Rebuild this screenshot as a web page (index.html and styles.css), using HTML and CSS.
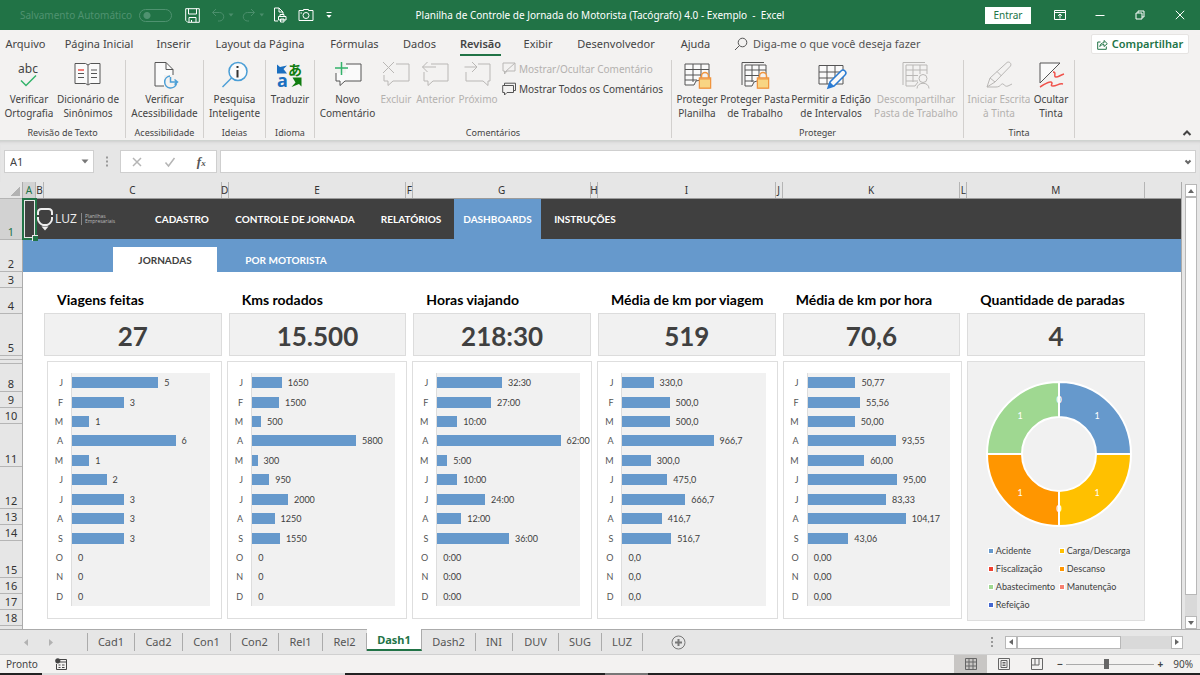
FILE: index.html
```html
<!DOCTYPE html>
<html lang="pt-BR">
<head>
<meta charset="utf-8">
<meta name="viewport" content="width=device-width, initial-scale=1">
<title>Planilha de Controle de Jornada do Motorista - Excel</title>
<link rel="stylesheet" href="styles.css">
</head>
<body>
<header class="titlebar">
  <div class="quick">
    <label class="autosave">Salvamento Automático<input type="checkbox" class="toggle" disabled></label>
    <button class="qbtn q-save" aria-label="Salvar"><svg width="15" height="15" viewBox="0 0 15 15"><path d="M.7.7h13.6v13.6H2.7L.7 12.300z M3.500 .7v5.300h8V.7 M4 14.300V9.500h7v4.800 M6.500 14v-2"/></svg></button>
    <button class="qbtn dim" aria-label="Desfazer"><svg width="20" height="14" viewBox="0 0 20 14"><path d="M5 1 1.500 4.500 5 8M1.500 4.500h7a4 4 0 0 1 0 8.500H7"/><path class="fill" d="M17.500 5.500h5l-2.500 3z"/></svg></button>
    <button class="qbtn dim" aria-label="Refazer"><svg width="22" height="14" viewBox="0 0 22 14"><path d="M9 1l3.500 3.500L9 8M12.500 4.500H5.500a4 4 0 0 0 0 8.500H7"/><path class="fill" d="M17.500 5.500h4.500l-2.200 3z"/></svg></button>
    <button class="qbtn q-print" aria-label="Visualizar impressão"><svg width="14" height="16" viewBox="0 0 14 16"><path d="M5 14H1.500V1H6l4 4v3M6 1v4h4M7 9.500V7.500h4v2M5.500 13V9.500h7.500V13zM7.500 12h3.500v3H7.500z"/></svg></button>
    <button class="qbtn" aria-label="Câmera"><svg width="16" height="14" viewBox="0 0 16 14"><path d="M1 2.500h4.500V1.500h5v1H15v10H1z"/><circle cx="8" cy="7.500" r="3"/><path d="M2.500 5h1.500"/></svg></button>
    <button class="qbtn" aria-label="Personalizar"><svg width="8" height="8" viewBox="0 0 8 8"><path d="M1.500 1.500h5"/><path class="fill" d="M1.500 4h5L4 7z"/></svg></button>
  </div>
  <h1 class="doc-title">Planilha de Controle de Jornada do Motorista (Tacógrafo) 4.0 - Exemplo&nbsp; -&nbsp; Excel</h1>
  <div class="window">
    <button class="signin">Entrar</button>
    <button class="wbtn" aria-label="Opções da faixa"><svg width="12" height="10" viewBox="0 0 12 10"><path d="M.5.5h11v9H.5zM.5 2.500h11M6 8.500V4M4 5.800 6 4l2 1.800"/></svg></button>
    <button class="wbtn" aria-label="Minimizar"><svg width="10" height="10" viewBox="0 0 10 10"><path d="M.5 5.500h9"/></svg></button>
    <button class="wbtn" aria-label="Restaurar"><svg width="10" height="10" viewBox="0 0 10 10"><path d="M1 3h6v6H1zM3 3V1h6v6H7"/></svg></button>
    <button class="wbtn" aria-label="Fechar"><svg width="10" height="10" viewBox="0 0 10 10"><path d="M.8.8l8.400 8.400M9.200.8.8 9.200"/></svg></button>
  </div>
</header>

<div class="menubar">
  <nav class="menu" aria-label="Guias">
    <button>Arquivo</button><button>Página Inicial</button><button>Inserir</button><button>Layout da Página</button><button>Fórmulas</button><button>Dados</button><button class="on"><span>Revisão</span></button><button>Exibir</button><button>Desenvolvedor</button><button>Ajuda</button>
  </nav>
  <label class="tellme"><svg width="14" height="14" viewBox="0 0 14 14"><circle cx="8.500" cy="5.500" r="4.300"/><path d="M5.500 8.500 1 13"/></svg><input type="text" placeholder="Diga-me o que você deseja fazer" aria-label="Diga-me"></label>
  <button class="share"><svg width="11" height="11" viewBox="0 0 11 11"><path d="M3.500 3H.7v7.300h8.600V7.500M2.800 7.500c.4-2.600 2-3.700 4.200-3.700V1.500l3.300 3.200L7 7.500V5.600c-2-.1-3.200.5-4.200 1.900z"/></svg>Compartilhar</button>
</div>

<section class="ribbon">
  <div class="group g-text">
    <div class="tools">
      <button><svg width="30" height="30" viewBox="0 0 30 30"><text x="14" y="13" class="abc">abc</text><path class="green" d="M7 20.500l5 5L22 15.500"/></svg>Verificar<br>Ortografia</button>
      <button><svg width="30" height="30" viewBox="0 0 30 30"><path class="paper" d="M2 3.500h10.500l2.500 1.500 2.500-1.500H27v20h-9.500L15 25l-2.500-1.500H2z"/><path class="ln" d="M15 5v19.500M5 13.500h6M5 17.500h6M18 10h6M18 13.500h6M18 17.500h6"/><path class="red" d="M5 10h6"/></svg>Dicionário de<br>Sinônimos</button>
    </div><h2>Revisão de Texto</h2>
  </div>
  <div class="group g-acc">
    <div class="tools"><button><svg width="30" height="30" viewBox="0 0 30 30"><path class="paper" d="M5 26V2.500h11l7 7V26z"/><path class="ln" d="M16 2.500v7h7"/><path class="mask" d="M14 15h16v14H14z"/><path class="blue" d="M20 16a6 6 0 1 0 6.500 7.500M20.500 17v5h6.500M24.500 19.500l3 2.500-3 2.500"/></svg>Verificar<br>Acessibilidade</button></div><h2>Acessibilidade</h2>
  </div>
  <div class="group g-idea">
    <div class="tools"><button><svg width="30" height="30" viewBox="0 0 30 30"><circle class="bluef" cx="18" cy="11.500" r="9"/><path class="blue" d="M11.500 18 2.500 27"/><path class="info" d="M17.500 10v7.500M17.500 6v2"/></svg>Pesquisa<br>Inteligente</button></div><h2>Ideias</h2>
  </div>
  <div class="group g-lang">
    <div class="tools"><button><svg width="30" height="30" viewBox="0 0 30 30"><path class="tr-blue" d="M2 4.500l3 2.500 7-1.500-3.500 3.500 3.500 4.500H2z"/><text x="2" y="27" class="tr-a">a</text><text x="13" y="15" class="tr-j">あ</text><path class="tr-green" d="M17.500 17.500h9v9l-2.500-2.500-7.500 3 4-4.500z"/></svg>Traduzir</button></div><h2>Idioma</h2>
  </div>
  <div class="group g-com">
    <div class="tools">
      <button><svg width="30" height="30" viewBox="0 0 30 30"><path class="paper" d="M3 4h25v17H12l-5 4.500V21H3z"/><path class="mask" d="M1 1h12v12H1z"/><path class="green" d="M8.500 2v13M2 8h13"/></svg>Novo<br>Comentário</button>
      <button disabled><svg width="30" height="30" viewBox="0 0 30 30"><path class="pale" d="M15 4h13v17H12l-5 4.500V21H3v-6"/><path class="pale" d="M2 2l11 11M13 2 2 13"/></svg>Excluir</button>
      <button disabled><svg width="30" height="30" viewBox="0 0 30 30"><path class="pale" d="M10 4h17v17H12l-5 4.500V21H3v-9M15 7H1.500M6.500 2l-5 5 5 5"/></svg>Anterior</button>
      <button disabled><svg width="30" height="30" viewBox="0 0 30 30"><path class="pale" d="M15 4h12v17h-2v4.500L20 21H3v-9M1.500 7h12.500M9 2l5 5-5 5"/></svg>Próximo</button>
      <div class="stack">
        <button disabled><svg width="14" height="14" viewBox="0 0 14 14"><path class="pale" d="M1 1h12v8H5l-2.500 3V9H1zM13 1 3 10"/></svg>Mostrar/Ocultar Comentário</button>
        <button><svg width="14" height="14" viewBox="0 0 14 14"><path class="ln" d="M.7 3.500h10.800v7H5L2.500 13v-2.500H.7zM2.500 3.500V1.200h11v7.300h-2"/></svg>Mostrar Todos os Comentários</button>
      </div>
    </div><h2>Comentários</h2>
  </div>
  <div class="group g-prot">
    <div class="tools">
      <button><svg width="30" height="30" viewBox="0 0 30 30"><path class="paper" d="M3 4h24v14L14 21l-2 4H3z"/><path class="ln" d="M3 9.500h24M3 15h24M3 20h12M11 4v18M19 4v14"/><path class="lockb" d="M17.500 18h11v10h-11zM19.500 18v-2a3.500 3.500 0 0 1 7 0v2"/><path class="lock" d="M17.500 19h11v9h-11z"/></svg>Proteger<br>Planilha</button>
      <button><svg width="30" height="30" viewBox="0 0 30 30"><path class="ln" d="M2 25V2.500h22"/><path class="paper" d="M5 5h21v13L14 22l-2 4H5z"/><path class="ln" d="M5 10h21M5 15.500h21M5 21h9M12 5v17M19 5v14"/><path class="lockb" d="M17.500 18h11v10h-11zM19.500 18v-2a3.500 3.500 0 0 1 7 0v2"/><path class="lock" d="M17.500 19h11v9h-11z"/></svg>Proteger Pasta<br>de Trabalho</button>
      <button><svg width="30" height="30" viewBox="0 0 30 30"><path class="paper" d="M3 5.500h24V24H3z"/><path class="ln" d="M3 12h24M3 18h24M11 5.500V24M19 5.500V24"/><path class="pencil" d="M12 28l2-6L25 11a2.500 2.500 0 0 1 4 4L18 26z"/><path class="pencilf" d="M12 28l2-6 4 4z"/></svg>Permitir a Edição<br>de Intervalos</button>
      <button disabled><svg width="30" height="30" viewBox="0 0 30 30"><path class="pale" d="M2 25V2.500h22M5 5h21v9M5 5v21h9l3-4M5 10h21M5 15.500h12M5 21h12M12 5v17M19 5v9"/><circle class="pale" cx="22" cy="18.500" r="4"/><path class="pale" d="M16 28.500c0-7 12-7 12 0"/></svg>Descompartilhar<br>Pasta de Trabalho</button>
    </div><h2>Proteger</h2>
  </div>
  <div class="group g-ink">
    <div class="tools">
      <button disabled><svg width="30" height="30" viewBox="0 0 30 30"><path class="pale" d="M3 27l3-9L23 2.500c2-1.500 5 1 3.500 3.500L11 22zM6 18l5 4M13 11.500l4.500 4.500M3 27h9c5 0 5-4 7-3s2 3 5 2l4-2"/></svg>Iniciar Escrita<br>à Tinta</button>
      <button><svg width="30" height="30" viewBox="0 0 30 30"><path class="paper" d="M4 3h20L4 23z"/><path class="red" d="M4 27c4-2 8-6 11-5s-2 4 2 4 6-3 10-2M17 12c4 0 0 5 3 5s4-2 8-3"/></svg>Ocultar<br>Tinta</button>
    </div><h2>Tinta</h2>
  </div>
  <button class="collapse" aria-label="Recolher"><svg width="10" height="6" viewBox="0 0 10 6"><path d="M1.500 5 5 1.500 8.500 5"/></svg></button>
</section>

<section class="formula">
  <div class="namebox"><input type="text" value="A1" aria-label="Caixa de nome"><button aria-label="Abrir nomes"><svg width="8" height="5" viewBox="0 0 8 5"><path d="M.5.5h7L4 4.500z"/></svg></button></div>
  <span class="dots"></span>
  <div class="fxbox">
    <button aria-label="Cancelar"><svg width="12" height="12" viewBox="0 0 12 12"><path d="M2 2l8 8M10 2l-8 8"/></svg></button>
    <button aria-label="Inserir"><svg width="12" height="12" viewBox="0 0 12 12"><path d="M1.500 6.500l3 3.500 6-8"/></svg></button>
    <button class="fx" aria-label="Inserir função">f<small>x</small></button>
  </div>
  <div class="fbar"><input type="text" aria-label="Barra de fórmulas"><button aria-label="Expandir"><svg width="8" height="6" viewBox="0 0 8 6"><path d="M1.500 1.500 4 4l2.500-2.500"/></svg></button></div>
</section>

<main class="book">
  <div class="rows">
    <div class="corner"></div>
    <div class="r1 sel">1</div><div class="r2">2</div><div class="r16">3</div><div class="r4">4</div><div class="r5">5</div><div class="tiny"></div><div class="tiny"></div><div class="r8">8</div><div class="r16">9</div><div class="r16">10</div><div class="r11">11</div><div class="r5">12</div><div class="r16">13</div><div class="r16">14</div><div class="r15">15</div><div class="r16">16</div><div class="r16">17</div><div class="r16">18</div><div class="last"></div>
  </div>
  <div class="sheet">
    <div class="cols"><span class="sel">A</span><span>B</span><span>C</span><span>D</span><span>E</span><span>F</span><span>G</span><span>H</span><span>I</span><span>J</span><span>K</span><span>L</span><span>M</span><span></span></div>
    <nav class="topnav">
      <span class="cursor"></span>
      <span class="logo"><svg width="18" height="24" viewBox="0 0 18 24"><path d="M2 8V5.500Q2 2 5.500 2h7Q16 2 16 5.500V8M2 10v2c0 3 3 5.500 5 6h4c2-.5 5-3 5-6v-2"/><path class="fill" d="M5.500 19.500h7L9 23.500z"/></svg><b>LUZ</b><small>Planilhas<br>Empresariais</small></span>
      <a href="#">CADASTRO</a><a href="#">CONTROLE DE JORNADA</a><a href="#">RELATÓRIOS</a><a href="#" class="on">DASHBOARDS</a><a href="#">INSTRUÇÕES</a>
    </nav>
    <nav class="subnav"><a href="#" class="on">JORNADAS</a><a href="#">POR MOTORISTA</a></nav>
    <div class="kpis">
      <article><h3>Viagens feitas</h3><p>27</p></article>
      <article><h3>Kms rodados</h3><p>15.500</p></article>
      <article><h3>Horas viajando</h3><p>218:30</p></article>
      <article><h3>Média de km por viagem</h3><p>519</p></article>
      <article><h3>Média de km por hora</h3><p>70,6</p></article>
      <article><h3>Quantidade de paradas</h3><p>4</p></article>
    </div>
    <div class="charts">
      <div class="chart" data-max="8" data-values="5|3|1|6|1|2|3|3|3|0|0|0"></div>
      <div class="chart" data-max="8000" data-values="1650|1500|500|5800|300|950|2000|1250|1550|0|0|0"></div>
      <div class="chart" data-max="72" data-values="32:30|27:00|10:00|62:00|5:00|10:00|24:00|12:00|36:00|0:00|0:00|0:00"></div>
      <div class="chart" data-max="1520" data-values="330,0|500,0|500,0|966,7|300,0|475,0|666,7|416,7|516,7|0,0|0,0|0,0"></div>
      <div class="chart" data-max="151" data-values="50,77|55,56|50,00|93,55|60,00|95,00|83,33|104,17|43,06|0,00|0,00|0,00"></div>
      <div class="donut">
        <svg viewBox="0 0 148 148" width="148" height="148">
          <g stroke="#fff" stroke-width="2">
            <path fill="#6699cc" d="M74 2a72 72 0 0 1 72 72h-35a37 37 0 0 0-37-37z"/>
            <path fill="#ffc000" d="M146 74a72 72 0 0 1-72 72v-35a37 37 0 0 0 37-37z"/>
            <path fill="#ff9600" d="M74 146A72 72 0 0 1 2 74h35a37 37 0 0 0 37 37z"/>
            <path fill="#9fd891" d="M2 74A72 72 0 0 1 74 2v35a37 37 0 0 0-37 37z"/>
          </g>
          <g class="dl"><text x="112" y="39">1</text><text x="112" y="116">1</text><text x="35" y="116">1</text><text x="35" y="39">1</text><text class="z" x="74" y="23">0</text><text class="z" x="74" y="132">0</text></g>
        </svg>
        <ul class="legend"><li class="c1">Acidente</li><li class="c2">Carga/Descarga</li><li class="c3">Fiscalização</li><li class="c4">Descanso</li><li class="c5">Abastecimento</li><li class="c6">Manutenção</li><li class="c7">Refeição</li></ul>
      </div>
    </div>
  </div>
  <div class="vscroll"><button aria-label="Rolar para cima"><svg width="6" height="4" viewBox="0 0 6 4"><path d="M0 4h6L3 0z"/></svg></button><span class="thumb"></span><span class="track"></span><button aria-label="Rolar para baixo"><svg width="6" height="4" viewBox="0 0 6 4"><path d="M0 0h6L3 4z"/></svg></button></div>
</main>

<div class="tabbar">
  <div class="arrows"><button aria-label="Anterior"><svg width="4" height="7" viewBox="0 0 4 7"><path d="M4 0v7L0 3.500z"/></svg></button><button aria-label="Próxima"><svg width="4" height="7" viewBox="0 0 4 7"><path d="M0 0v7l4-3.500z"/></svg></button></div>
  <nav class="sheets"><button>Cad1</button><button>Cad2</button><button>Con1</button><button>Con2</button><button>Rel1</button><button>Rel2</button><button class="on">Dash1</button><button>Dash2</button><button>INI</button><button>DUV</button><button>SUG</button><button>LUZ</button></nav>
  <button class="add" aria-label="Nova planilha"><svg width="15" height="15" viewBox="0 0 15 15"><circle cx="7.500" cy="7.500" r="6.500"/><path class="thick" d="M4 7.500h7M7.500 4v7"/></svg></button>
  <span class="dots"></span>
  <div class="hscroll"><button aria-label="Rolar à esquerda"><svg width="4" height="6" viewBox="0 0 4 6"><path d="M4 0v6L0 3z"/></svg></button><span class="thumb"></span><span class="track"></span><button aria-label="Rolar à direita"><svg width="4" height="6" viewBox="0 0 4 6"><path d="M0 0v6l4-3z"/></svg></button></div>
</div>

<footer class="status">
  <span class="ready">Pronto</span>
  <button class="macro" aria-label="Gravar macro"><svg width="12" height="12" viewBox="0 0 12 12"><path d="M5 1.500h6.500v10h-10V6M5 4h6M3.500 7h2M7 7h2.500M3.500 9.500h2M7 9.500h2.500"/><circle cx="2.800" cy="2.800" r="2.600" class="fill"/></svg></button>
  <div class="views">
    <button class="on" aria-label="Normal"><svg width="12" height="12" viewBox="0 0 12 12"><path d="M.5.5h11v11H.5zM.5 4h11M.5 8h11M4 .5v11M8 .5v11"/></svg></button>
    <button aria-label="Layout da Página"><svg width="12" height="12" viewBox="0 0 12 12"><path d="M.5.5h11v11H.5zM3 2.500h6v7H3zM4.500 4.500h3M4.500 6h3M4.500 7.500h3"/></svg></button>
    <button aria-label="Quebra de página"><svg width="12" height="12" viewBox="0 0 12 12"><path d="M.5.5h11v11H.5zM4 .5V7M8 .5V7H.5"/></svg></button>
  </div>
  <div class="zoom"><button aria-label="Reduzir">−</button><input type="range" min="0" max="100" value="45" aria-label="Zoom"><button aria-label="Ampliar">+</button><span>90%</span></div>
</footer>
<div class="edge"></div>
<script src="charts.js"></script>
</body>
</html>
```

FILE: styles.css
```css
* { box-sizing: border-box; }
body {
  margin: 0;
  min-height: 100vh;
  display: flex;
  flex-direction: column;
  background: #e6e6e6;
  color: #444;
  font: 10px/14px "Noto Sans", "Open Sans", sans-serif;
}
button, input { font: inherit; color: inherit; margin: 0; padding: 0; border: 0; background: none; border-radius: 0; }
h1, h2, h3, p, ul { margin: 0; padding: 0; font-weight: 400; }
a { text-decoration: none; color: inherit; }
svg { display: block; fill: none; stroke: currentColor; flex: none; overflow: visible; }
svg text { stroke: none; fill: currentColor; }
.fill { fill: currentColor; stroke: none; }

/* title bar */
.titlebar { height: 30px; display: grid; grid-template-columns: 1fr auto 1fr; align-items: center; background: #217346; color: #fff; }
.quick { display: flex; align-items: center; gap: 11px; padding-left: 20px; }
.autosave { display: flex; align-items: center; gap: 7px; color: #4f9270; white-space: nowrap; }
.toggle { appearance: none; width: 33px; height: 13px; border: 1px solid #4f9270; border-radius: 7px; background: radial-gradient(circle at 7px 50%, #4f9270 3px, transparent 4px); }
.qbtn { display: flex; }
.q-save { margin-left: 2px; }
.q-print { margin-left: -2px; }
.dim { color: #4a8e6b; }
.doc-title { font-size: 10px; white-space: pre; }
.window { display: flex; align-items: center; justify-content: flex-end; }
.signin { background: #fff; color: #217346; width: 46px; height: 17px; margin-right: 9px; }
.wbtn { width: 40px; height: 30px; display: grid; place-items: center; }

/* ribbon tabs */
.menubar { display: flex; align-items: center; height: 28px; background: #f3f2f1; font-size: 11px; }
.menu { display: grid; grid-template-columns: 51px 96px 53px 120px 69px 61px 61px 54px 102px 57px; height: 28px; }
.menu button { white-space: nowrap; padding-bottom: 1px; }
.menu .on { font-weight: 600; }
.menu .on span { display: block; margin: 5px 10px 0; padding-bottom: 3px; border-bottom: 2px solid #217346; }
.tellme { flex: 1; display: flex; align-items: center; gap: 5px; padding-left: 10px; color: #555; }
.tellme input { flex: 1; }
.tellme input::placeholder { color: #555; opacity: 1; }
.share { display: flex; align-items: center; justify-content: center; gap: 4px; width: 98px; height: 20px; margin-right: 11px; background: #fff; border: 1px solid #e6e4e2; border-radius: 2px; color: #217346; font-weight: 600; }

/* ribbon */
.ribbon { display: flex; padding: 2px 0 0; height: 83px; background: #f3f2f1; border-bottom: 1px solid #cfd3d0; }
.group { display: flex; flex-direction: column; justify-content: space-between; height: 78px; border-right: 1px solid #d2d0ce; }
.group h2 { font-size: 9px; line-height: 10px; text-align: center; }
.tools { display: flex; justify-content: center; height: 64px; }
.tools button { display: flex; flex-direction: column; align-items: center; white-space: nowrap; text-align: center; line-height: 14px; }
.tools button svg { margin-bottom: 2px; align-self: center; }
.tools > button { justify-content: flex-start; }
.tools button:disabled { color: #b3b1af; }
.g-text { width: 126px; }
.g-acc { width: 78px; } .g-idea { width: 62px; } .g-lang { width: 49px; }
.g-com { width: 357px; } .g-prot { width: 292px; } .g-ink { width: 111px; }
.g-text .tools { display: grid; grid-template-columns: 58px 60px; justify-content: start; }
.g-com .tools { display: grid; grid-template-columns: 65px 32px 47px 38px 1fr; }
.g-prot .tools { display: grid; grid-template-columns: 50px 66px 86px 84px; justify-content: start; }
.g-ink .tools { display: grid; grid-template-columns: 70px 34px; justify-content: start; }
.tools > button { width: 100%; overflow: visible; }
.stack { padding: 2px 0 0 5px; display: flex; flex-direction: column; gap: 6px; }
.stack button { flex-direction: row; gap: 3px; }
.stack button svg { margin: 0; }
.paper { fill: #fafafa; stroke: #555; }
.ln { stroke: #555; }
.pale { stroke: #b9b7b5; fill: none; }
.mask { fill: #f3f2f1; stroke: none; }
.green { stroke: #33b36b; stroke-width: 1.5; }
.blue { stroke: #4a9ed6; stroke-width: 1.5; }
.bluef { stroke: #4a9ed6; stroke-width: 1.5; fill: #fafafa; }
.info { stroke: #333; stroke-width: 2; }
.red { stroke: #f0524b; stroke-width: 1.5; }
.lockb { stroke: #f0953f; stroke-width: 1.5; fill: #f3f2f1; }
.lock { stroke: #f0953f; fill: #f8d583; }
.pencil { stroke: #2b7cd3; stroke-width: 1.5; fill: #fafafa; }
.pencilf { fill: #2b7cd3; stroke: none; }
.abc { font-size: 12px; text-anchor: middle; }
.tr-a { font: 700 18px "Noto Sans", sans-serif; fill: #1a6fc0; }
.tr-j { font: 700 14px "Noto Sans CJK JP", sans-serif; fill: #107c10; }
.tr-blue { fill: #1a6fc0; stroke: none; }
.tr-green { fill: #107c10; stroke: none; }
.collapse { margin-left: auto; align-self: flex-end; padding: 4px 8px; }
.collapse svg { stroke-width: 2; }

/* formula bar */
.formula { display: flex; align-items: stretch; height: 41px; padding: 9px 4px; box-shadow: inset 0 3px 3px -2px #ccc; font-size: 11px; }
.namebox, .fxbox, .fbar { display: flex; align-items: center; background: #fff; border: 1px solid #cfcfcf; }
.namebox { width: 90px; padding: 0 4px 0 5px; }
.namebox input { width: 60px; flex: 1; }
.namebox svg { fill: #777; stroke: none; }
.dots { width: 26px; background: radial-gradient(circle, #999 1px, transparent 1px) center / 26px 4px repeat-y; margin: 6px 0; }
.fxbox { width: 97px; justify-content: space-around; color: #b5b5b5; }
.fxbox svg { stroke-width: 1.5; }
.fx { color: #555; font: italic 700 13px "Liberation Serif", serif; }
.fx small { font-size: 9px; }
.fbar { flex: 1; margin-left: 3px; padding-right: 3px; }
.fbar input { flex: 1; height: 100%; }
.fbar svg { stroke: #666; stroke-width: 2; }

/* workbook */
.book { flex: 1; display: grid; grid-template-columns: 23px 1fr 18px; font-size: 11px; border-bottom: 1px solid #ababab; }
.rows { display: flex; flex-direction: column; border-right: 1px solid #ababab; text-align: center; color: #333; }
.rows div { display: flex; align-items: flex-end; justify-content: center; border-bottom: 1px solid #b5b5b5; line-height: 15px; overflow: hidden; flex: none; }
.rows .corner { height: 17px; background: linear-gradient(135deg, transparent 50%, #b2b2b2 50%) 10px 5px / 10px 9px no-repeat; }
.rows .r1 { height: 41px; } .rows .r2 { height: 32px; } .rows .r16 { height: 16px; } .rows .r4 { height: 26px; }
.rows .r5 { height: 42px; } .rows .tiny { height: 4px; } .rows .r8 { height: 28px; } .rows .r11 { height: 43px; } .rows .r15 { height: 37px; }
.rows .last { border: 0; flex: 1; min-height: 3px; }
.rows .sel, .cols .sel { background: #d2d2d2; color: #217346; }
.sheet { background: #fff; border-right: 1px solid #ababab; }
.cols { display: grid; grid-template-columns: 13px 8px 1fr 7px 1fr 7px 1fr 7px 1fr 7px 1fr 7px 1fr 36px; height: 17px; background: #e6e6e6; border-bottom: 1px solid #9b9b9b; color: #333; line-height: 16px; font-size: 10px; }
.cols span { display: flex; justify-content: center; min-width: 0; border-right: 1px solid #b5b5b5; }
.cols span:last-child { border: 0; }
.topnav, .subnav { display: flex; font: 700 10px/14px Lato, "Open Sans", sans-serif; color: #fff; }
.topnav { height: 40px; background: #404040; }
.topnav a { display: grid; place-items: center; white-space: nowrap; }
.topnav .on { background: #69c; width: 87px; }
.topnav a:nth-of-type(1) { width: 80px; } .topnav a:nth-of-type(2) { width: 146px; } .topnav a:nth-of-type(3) { width: 86px; } .topnav a:nth-of-type(5) { width: 88px; }
.cursor { position: relative; width: 13px; border: 1px solid #217346; outline: 1px solid #217346; box-shadow: inset 0 0 0 1px #e6e6e6; }
.cursor::after { content: ""; position: absolute; right: -3px; bottom: -3px; width: 5px; height: 5px; background: #217346; border: solid #e6e6e6; border-width: 1px 0 0 1px; }
.logo { width: 106px; display: flex; align-items: center; color: #eee; }
.logo svg { stroke-width: 2; }
.logo b { font: 400 12px/14px "Open Sans", sans-serif; padding: 0 4px 0 1px; }
.logo small { font: 400 5px/5px "Open Sans", sans-serif; border-left: 1px solid #888; padding: 1px 0 1px 3px; color: #bbb; }
.subnav { height: 33px; padding: 8px 0 0 90px; background: #69c; }
.subnav a { width: 138px; display: grid; place-items: center; }
.subnav .on { width: 104px; background: #fff; color: #404040; }
.kpis { display: grid; grid-template-columns: repeat(6, 1fr); gap: 7px; padding: 19px 36px 5px 21px; font-family: Lato, "Open Sans", sans-serif; font-weight: 700; }
.kpis h3 { font: inherit; font-size: 14px; line-height: 18px; padding: 0 0 4px 13px; color: #000; white-space: nowrap; }
.kpis p { height: 43px; display: grid; place-items: center; background: #f1f1f1; border: 1px solid #dcdcdc; color: #404040; font: inherit; font-size: 26px; line-height: 32px; padding-top: 2px; }

/* charts */
.charts { display: grid; grid-template-columns: 175fr 180fr 180fr 180fr 179fr 178fr; gap: 5px; padding: 0 36px 8px 24px; font: 9px/11px Lato, "Open Sans", sans-serif; color: #404040; align-items: start; }
.chart { min-width: 0; height: 258px; border: 1px solid #dedede; padding: 11px 11px 12px 0; display: grid; grid-template-rows: repeat(12, 1fr); }
.bar-row { display: grid; grid-template-columns: 23px 1fr; min-height: 0; }
.month { display: flex; align-items: center; justify-content: flex-end; padding-right: 8px; color: #555; }
.plot { display: flex; align-items: center; gap: 6px; min-width: 0; background: #f1f1f1; border-left: 1px solid #ddd; }
.bar { height: 11px; background: #69c; flex: none; }
.donut { min-width: 0; height: 260px; padding: 18px 0 0; background: #f1f1f1; border: 1px solid #dedede; display: flex; flex-direction: column; align-items: center; gap: 17px; }
.donut svg { margin-left: 6px; stroke: none; }
.dl text { fill: #fff; text-anchor: middle; }
.dl .z { font-weight: 700; }
.legend { list-style: none; align-self: stretch; padding-left: 21px; display: grid; grid-template-columns: 71px 1fr; row-gap: 6px; line-height: 12px; }
.legend li { display: flex; align-items: center; gap: 3px; white-space: nowrap; }
.legend li::before { content: ""; width: 4px; height: 4px; flex: none; background: var(--c); outline: 1px solid #fff; }
.c1 { --c: #69c; } .c2 { --c: #ffc000; } .c3 { --c: #f04030; } .c4 { --c: #ff9600; } .c5 { --c: #9fd891; } .c6 { --c: #f88070; } .c7 { --c: #4468d0; }

/* scrollbars */
.vscroll { display: flex; flex-direction: column; padding: 2px 3px 0 3px; }
.vscroll button, .hscroll button { display: grid; place-items: center; width: 12px; height: 13px; background: #fff; border: 1px solid #b8b8b8; flex: none; }
.vscroll svg, .hscroll svg, .arrows svg { fill: #666; stroke: none; }
.vscroll .thumb { flex: 400; background: #fff; border: 1px solid #b8b8b8; }
.vscroll .track { flex: 21; background: #d9d9d9; }
.hscroll { display: flex; width: 178px; }
.hscroll .thumb { flex: 102; background: #fff; border: 1px solid #b8b8b8; }
.hscroll .track { flex: 50; background: #d9d9d9; }

/* sheet tabs */
.tabbar { height: 25px; display: flex; align-items: center; padding-right: 17px; font-size: 11px; color: #555; border-bottom: 1px solid #d0d0d0; }
.arrows { width: 87px; display: flex; gap: 21px; padding-left: 24px; opacity: .4; }
.sheets { display: grid; grid-template-columns: 48px 48px 48px 48px 44px 44px 55px 54px 37px 46px 43px 41px; height: 24px; align-items: start; }
.sheets button { height: 18px; margin-top: 3px; border-right: 1px solid #ababab; }
.sheets button:first-child { border-left: 1px solid #ababab; }
.sheets .on { height: 22px; margin: -1px 0 0; padding-top: 2px; background: #fff; color: #217346; font-weight: 700; border-bottom: 2px solid #217346; }
.add { margin: 0 auto 0 28px; color: #777; }
.thick { stroke-width: 2; }
.tabbar .dots { align-self: stretch; }

/* status bar */
.status { height: 18px; display: flex; align-items: center; background: #f3f2f1; padding: 0 7px 0 6px; }
.ready { font-size: 10px; }
.macro { margin-left: 17px; }
.views { display: flex; margin-left: auto; color: #666; }
.views button { width: 33px; height: 18px; display: grid; place-items: center; }
.views .on { background: #c8c6c4; }
.zoom { display: flex; align-items: center; margin-left: 1px; }
.zoom button { width: 12px; font-weight: 700; }
.zoom span { padding-left: 7px; }
.zoom input { appearance: none; width: 88px; height: 12px; background: linear-gradient(#aaa, #aaa) center / 100% 1px no-repeat; }
.zoom input::-webkit-slider-thumb { appearance: none; width: 5px; height: 10px; background: #666; }
.edge { height: 2px; background: linear-gradient(90deg, #222 42px, #ddd 42px 345px, #222 345px 605px, #777 605px 648px, #222 648px); }
```

FILE: charts.js
```js
const months = "JFMAMJJASOND";

function toNumber(text) {
  if (text.includes(":")) {
    const [hours, minutes] = text.split(":").map(Number);
    return hours + minutes / 60;
  }
  return Number(text.replace(",", "."));
}

document.querySelectorAll(".chart").forEach((chart) => {
  const max = Number(chart.dataset.max);
  chart.dataset.values.split("|").forEach((text, i) => {
    const row = document.createElement("div");
    row.className = "bar-row";
    const label = document.createElement("span");
    label.className = "month";
    label.textContent = months[i];
    const plot = document.createElement("div");
    plot.className = "plot";
    const bar = document.createElement("span");
    bar.className = "bar";
    bar.style.width = (toNumber(text) / max) * 100 + "%";
    const value = document.createElement("span");
    value.textContent = text;
    plot.append(bar, value);
    row.append(label, plot);
    chart.append(row);
  });
});
```
